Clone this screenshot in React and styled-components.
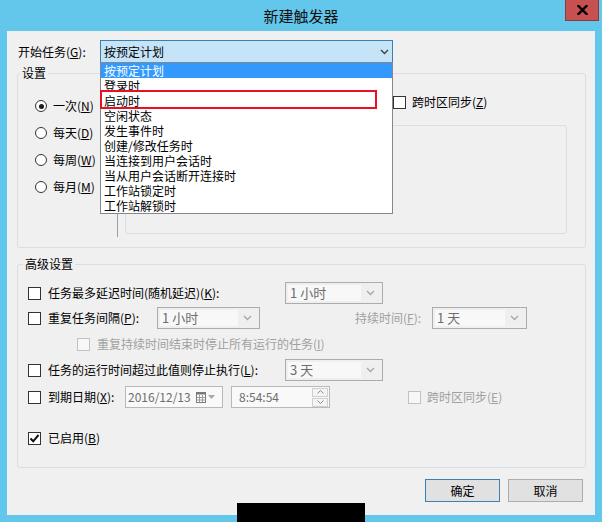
import React from 'react';
import styled, { createGlobalStyle } from 'styled-components';

const GlobalStyle = createGlobalStyle`
  html, body { margin: 0; padding: 0; }
  body {
    width: 602px; height: 522px; overflow: hidden; background: #62c7eb;
    font-family: "Noto Sans CJK SC", "Noto Sans", sans-serif; font-size: 12px; color: #000;
  }
  * { box-sizing: border-box; }
  u { text-underline-offset: 1px; }
`;

const Window = styled.div`
  position: relative;
  width: 602px;
  height: 522px;
  background: #62c7eb;
  display: flex;
  flex-direction: column;
`;

const TitleBar = styled.div`
  height: 31px;
  display: grid;
  grid-template-columns: 1fr auto 1fr;
`;

const Title = styled.div`
  grid-column: 2;
  font-size: 15px;
  line-height: 31px;
  color: #111;
`;

const CloseButton = styled.div`
  grid-column: 3;
  justify-self: end;
  align-self: start;
  width: 34px;
  height: 21px;
  margin-right: 3px;
  background: #c75050;
  border: 1px solid #8e3b35;
  border-top: none;
  display: flex;
  align-items: center;
  justify-content: center;
`;

const Client = styled.div`
  margin: 0 7px;
  height: 484px;
  background: #f0f0f0;
  padding-top: 9px;
  display: flex;
  flex-direction: column;
`;

const StartRow = styled.div`
  display: flex;
  align-items: center;
  height: 23px;
  padding-left: 11px;
`;

const FieldLabel = styled.div`
  width: ${p => p.$w}px;
  flex: none;
  line-height: 16px;
  white-space: nowrap;
  color: ${p => (p.$disabled ? '#a0a0a0' : '#000')};
  margin-left: ${p => p.$ml || 0}px;
`;

const ComboActive = styled.div`
  position: relative;
  width: 293px;
  height: 23px;
  border: 1px solid #3c7fb1;
  background: #c6e4f7;
  display: flex;
  align-items: center;
  padding: 0 3px 0 3px;
`;

const ComboText = styled.span`
  flex: 1;
  line-height: 16px;
`;

const DropList = styled.div`
  position: absolute;
  z-index: 10;
  top: 100%;
  left: -1px;
  width: 293px;
  height: 152px;
  background: #fff;
  border: 1px solid #828790;
`;

const DropItem = styled.div`
  height: 15px;
  line-height: 15px;
  padding-left: 3px;
  overflow: hidden;
  white-space: nowrap;
  background: ${p => (p.$selected ? '#3399ff' : 'transparent')};
  color: ${p => (p.$selected ? '#fff' : '#000')};
`;

const RedMark = styled.div`
  position: absolute;
  top: 27px;
  left: -1px;
  width: 277px;
  height: 19px;
  border: 2px solid #e81123;
  pointer-events: none;
`;

const GroupBox = styled.div`
  margin: ${p => p.$mt}px 9px 0 10px;
  height: ${p => p.$h}px;
  border: 1px solid #d5dfe5;
  border-radius: 3px;
  display: flex;
  flex-direction: column;
`;

const GroupTitle = styled.div`
  align-self: flex-start;
  margin: -9px 0 0 ${p => p.$ml}px;
  padding: 0 2px;
  height: 16px;
  line-height: 16px;
  background: #f0f0f0;
`;

const SettingsBody = styled.div`
  flex: 1;
  display: flex;
`;

const RadioColumn = styled.div`
  width: 99px;
  flex: none;
  padding: 17px 0 0 17px;
  display: flex;
  flex-direction: column;
  gap: 11px;
`;

const RadioRow = styled.div`
  height: 16px;
  display: flex;
  align-items: center;
  gap: 6px;
  line-height: 16px;
  white-space: nowrap;
`;

const Radio = styled.span`
  width: 12px;
  height: 12px;
  flex: none;
  border: 1px solid #333;
  border-radius: 50%;
  background: #fff;
  display: flex;
  align-items: center;
  justify-content: center;
  &::after {
    content: '';
    display: ${p => (p.$checked ? 'block' : 'none')};
    width: 5px;
    height: 5px;
    border-radius: 50%;
    background: #1a1a1a;
  }
`;

const VSeparator = styled.div`
  width: 1px;
  flex: none;
  margin: 7px 0 10px;
  background: #a0a0a0;
`;

const RightPanel = styled.div`
  flex: 1;
  margin: 0 18px 0 7px;
  padding-top: 10px;
  display: flex;
  flex-direction: column;
`;

const Row = styled.div`
  display: flex;
  align-items: center;
  height: ${p => p.$h || 22}px;
  margin-top: ${p => p.$mt || 0}px;
  white-space: nowrap;
`;

const SubBox = styled.div`
  margin-top: 12px;
  height: 109px;
  border: 1px solid #d5dfe5;
  border-radius: 3px;
`;

const AdvBody = styled.div`
  padding-left: 10px;
  display: flex;
  flex-direction: column;
`;

const Lead = styled.div`
  width: ${p => (p.$w ? `${p.$w}px` : 'auto')};
  flex: none;
  display: flex;
  align-items: center;
  gap: ${p => p.$gap || 7}px;
  margin-left: ${p => p.$ml || 0}px;
  line-height: 16px;
  color: ${p => (p.$disabled ? '#a0a0a0' : '#000')};
`;

const Box = styled.span`
  width: 13px;
  height: 13px;
  flex: none;
  border: 1px solid ${p => (p.$disabled ? '#c2c2c2' : '#333')};
  background: ${p => (p.$disabled ? '#f7f7f7' : '#fff')};
  display: flex;
  align-items: center;
  justify-content: center;
`;

const DisCombo = styled.div`
  width: ${p => p.$w}px;
  height: 22px;
  flex: none;
  border: 1px solid #acacac;
  background: #efefef;
  display: flex;
  align-items: stretch;
  padding: 2px;
`;

const DisComboText = styled.span`
  flex: 1;
  background: #f8f8f8;
  color: #6d6d6d;
  padding-left: 2px;
  line-height: 16px;
  font-size: 13px;
`;

const DisArrow = styled.span`
  width: 19px;
  flex: none;
  display: flex;
  align-items: center;
  justify-content: center;
`;

const PickerBox = styled.div`
  width: ${p => p.$w}px;
  height: 22px;
  flex: none;
  margin-left: ${p => p.$ml || 0}px;
  border: 1px solid #b9b9b9;
  background: #f9f9f9;
  color: #6d6d6d;
  display: flex;
  align-items: center;
  padding-left: ${p => p.$pl}px;
  font-size: 12px;
`;

const PickerText = styled.span`
  flex: 1;
  line-height: 16px;
`;

const CalButton = styled.span`
  display: flex;
  align-items: center;
  gap: 2px;
  margin-right: 7px;
`;

const Spin = styled.span`
  width: 16px;
  flex: none;
  margin-right: 1px;
  display: flex;
  flex-direction: column;
  gap: 1px;
`;

const SpinPart = styled.span`
  height: 9px;
  border: 1px solid #d0d0d0;
  background: #f4f4f4;
  display: flex;
  align-items: center;
  justify-content: center;
`;

const ButtonRow = styled.div`
  display: flex;
  justify-content: flex-end;
  gap: 8px;
  margin-top: 11px;
  padding-right: 12px;
`;

const Button = styled.button`
  width: 75px;
  height: 23px;
  padding: 0;
  border: 1px solid ${p => (p.$default ? '#3c7fb1' : '#adadad')};
  background: #e1e1e1;
  font-family: inherit;
  font-size: 12px;
  color: #000;
`;

const Redaction = styled.div`
  position: absolute;
  left: 237px;
  top: 503px;
  width: 128px;
  height: 19px;
  background: #000;
`;

const Chevron = ({ color = '#404040', w = 9 }) => (
  <svg width={w} height="6" viewBox="0 0 9 6">
    <polyline points="1,1 4.5,4.5 8,1" fill="none" stroke={color} strokeWidth="1.4" />
  </svg>
);

const CheckMark = () => (
  <svg width="11" height="11" viewBox="0 0 11 11">
    <polyline points="1.5,5.5 4.2,8.3 9.5,2" fill="none" stroke="#111" strokeWidth="2" />
  </svg>
);

const CloseGlyph = () => (
  <svg width="11" height="10" viewBox="0 0 11 10">
    <path d="M1.5 1 L9.5 9 M9.5 1 L1.5 9" stroke="#000" strokeWidth="2.4" strokeLinecap="square" />
  </svg>
);

const CalendarIcon = () => (
  <svg width="10" height="11" viewBox="0 0 10 11">
    <rect x="0.5" y="0.5" width="9" height="10" fill="#fff" stroke="#7a7a7a" />
    <rect x="0.5" y="0.5" width="9" height="2" fill="#7a7a7a" />
    <path d="M3.5 3 V10.5 M6.5 3 V10.5 M0.5 5.5 H9.5 M0.5 8 H9.5" stroke="#9a9a9a" strokeWidth="1" />
  </svg>
);

const SmallTriangle = () => (
  <svg width="7" height="4" viewBox="0 0 7 4">
    <polygon points="0,0 7,0 3.5,4" fill="#a8a8a8" />
  </svg>
);

const SpinChevron = ({ up }) => (
  <svg width="7" height="4" viewBox="0 0 7 4">
    <polyline
      points={up ? '0.5,3.5 3.5,0.5 6.5,3.5' : '0.5,0.5 3.5,3.5 6.5,0.5'}
      fill="none"
      stroke="#8a8a8a"
      strokeWidth="1"
    />
  </svg>
);

const Check = ({ checked, disabled }) => (
  <Box $disabled={disabled}>{checked && <CheckMark />}</Box>
);

const DisabledCombo = ({ w, value }) => (
  <DisCombo $w={w}>
    <DisComboText>{value}</DisComboText>
    <DisArrow>
      <Chevron color="#a8a8a8" w={9} />
    </DisArrow>
  </DisCombo>
);

const triggerOptions = [
  '按预定计划',
  '登录时',
  '启动时',
  '空闲状态',
  '发生事件时',
  '创建/修改任务时',
  '当连接到用户会话时',
  '当从用户会话断开连接时',
  '工作站锁定时',
  '工作站解锁时',
];

const radios = [
  { label: '一次', key: 'N', checked: true },
  { label: '每天', key: 'D' },
  { label: '每周', key: 'W' },
  { label: '每月', key: 'M' },
];

export default function App() {
  return (
    <>
      <GlobalStyle />
      <Window>
        <TitleBar>
          <Title>新建触发器</Title>
          <CloseButton>
            <CloseGlyph />
          </CloseButton>
        </TitleBar>
        <Client>
          <StartRow>
            <FieldLabel $w={82}>
              开始任务(<u>G</u>):
            </FieldLabel>
            <ComboActive>
              <ComboText>按预定计划</ComboText>
              <Chevron />
              <DropList>
                {triggerOptions.map((o, i) => (
                  <DropItem key={o} $selected={i === 0}>
                    {o}
                  </DropItem>
                ))}
                <RedMark />
              </DropList>
            </ComboActive>
          </StartRow>

          <GroupBox $mt={10} $h={175}>
            <GroupTitle $ml={2}>设置</GroupTitle>
            <SettingsBody>
              <RadioColumn>
                {radios.map(r => (
                  <RadioRow key={r.key}>
                    <Radio $checked={r.checked} />
                    <span>
                      {r.label}(<u>{r.key}</u>)
                    </span>
                  </RadioRow>
                ))}
              </RadioColumn>
              <VSeparator />
              <RightPanel>
                <Row>
                  <Lead $ml={268} $gap={6}>
                    <Check />
                    <span>
                      跨时区同步(<u>Z</u>)
                    </span>
                  </Lead>
                </Row>
                <SubBox />
              </RightPanel>
            </SettingsBody>
          </GroupBox>

          <GroupBox $mt={16} $h={204}>
            <GroupTitle $ml={5}>高级设置</GroupTitle>
            <AdvBody>
              <Row $mt={10}>
                <Lead $w={257}>
                  <Check />
                  <span>
                    任务最多延迟时间(随机延迟)(<u>K</u>):
                  </span>
                </Lead>
                <DisabledCombo w={98} value="1 小时" />
              </Row>
              <Row $mt={3}>
                <Lead $w={129}>
                  <Check />
                  <span>
                    重复任务间隔(<u>P</u>):
                  </span>
                </Lead>
                <DisabledCombo w={103} value="1 小时" />
                <FieldLabel $w={77} $ml={95} $disabled>
                  持续时间(<u>F</u>):
                </FieldLabel>
                <DisabledCombo w={95} value="1 天" />
              </Row>
              <Row $mt={7} $h={16}>
                <Lead $ml={49} $disabled>
                  <Check disabled />
                  <span>
                    重复持续时间结束时停止所有运行的任务(<u>I</u>)
                  </span>
                </Lead>
              </Row>
              <Row $mt={7}>
                <Lead $w={257}>
                  <Check />
                  <span>
                    任务的运行时间超过此值则停止执行(<u>L</u>):
                  </span>
                </Lead>
                <DisabledCombo w={98} value="3 天" />
              </Row>
              <Row $mt={5}>
                <Lead $w={97}>
                  <Check />
                  <span>
                    到期日期(<u>X</u>):
                  </span>
                </Lead>
                <PickerBox $w={98} $pl={2}>
                  <PickerText>2016/12/13</PickerText>
                  <CalButton>
                    <CalendarIcon />
                    <SmallTriangle />
                  </CalButton>
                </PickerBox>
                <PickerBox $w={99} $ml={8} $pl={7}>
                  <PickerText>8:54:54</PickerText>
                  <Spin>
                    <SpinPart>
                      <SpinChevron up />
                    </SpinPart>
                    <SpinPart>
                      <SpinChevron />
                    </SpinPart>
                  </Spin>
                </PickerBox>
                <Lead $ml={78} $gap={6} $disabled>
                  <Check disabled />
                  <span>
                    跨时区同步(<u>E</u>)
                  </span>
                </Lead>
              </Row>
              <Row $mt={22} $h={16}>
                <Lead>
                  <Check checked />
                  <span>
                    已启用(<u>B</u>)
                  </span>
                </Lead>
              </Row>
            </AdvBody>
          </GroupBox>

          <ButtonRow>
            <Button $default>确定</Button>
            <Button>取消</Button>
          </ButtonRow>
        </Client>
        <Redaction />
      </Window>
    </>
  );
}
